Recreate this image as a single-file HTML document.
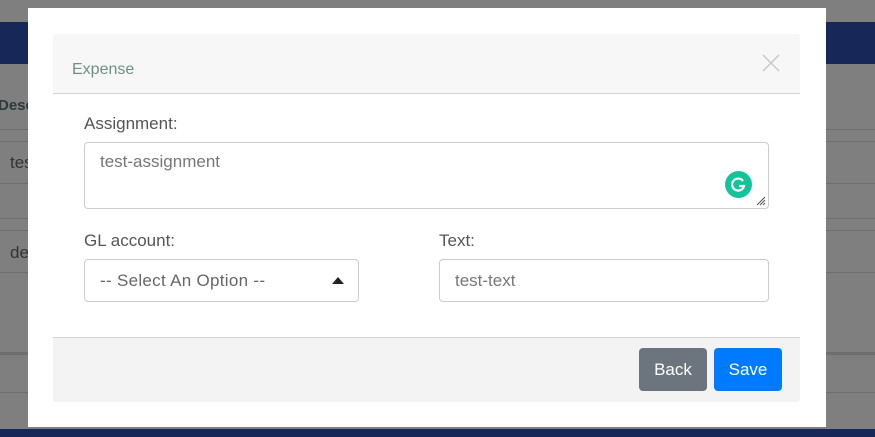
<!DOCTYPE html>
<html><head><style>
body{margin:0;width:875px;height:437px;background:#7f7f7f;position:relative;overflow:hidden;font-family:"Liberation Sans",sans-serif}
.a{position:absolute}
.ln{position:absolute;height:1px;background:#6e6e6e}
.t{font-size:17px}
</style></head><body>
<div class="a" style="left:0;top:22px;width:875px;height:42px;background:#172858"></div>
<div class="a" style="left:0;top:429px;width:875px;height:8px;background:#172858"></div>
<div class="a" style="left:-2px;top:97px;font-weight:bold;font-size:15px;color:#2d3a3a">Desc</div>
<div class="a" style="left:10px;top:153px;font-size:17px;color:#333">tes</div>
<div class="a" style="left:10px;top:243px;font-size:17px;color:#333">de</div>
<div class="ln" style="left:0;top:129px;width:875px"></div>
<div class="ln" style="left:0;top:141px;width:875px"></div>
<div class="ln" style="left:0;top:183px;width:875px"></div>
<div class="ln" style="left:0;top:218px;width:875px"></div>
<div class="ln" style="left:0;top:230px;width:875px"></div>
<div class="ln" style="left:0;top:272px;width:875px"></div>
<div class="ln" style="left:0;top:352px;width:875px;height:3px"></div>
<div class="ln" style="left:0;top:392px;width:875px"></div>

<div class="a" style="left:28px;top:8px;width:798px;height:419px;background:#fff"></div>
<div class="a" style="left:53px;top:34px;width:747px;height:59px;background:#f7f7f7;border-bottom:1px solid #d4d4d4;border-radius:3px 3px 0 0"></div>
<div class="a" style="left:72px;top:61px;font-size:16px;color:#6f8f86">Expense</div>
<svg class="a" style="left:762px;top:54px" width="18" height="18"><path d="M1 1L17 17M17 1L1 17" stroke="#c8c8c8" stroke-width="1.5"/></svg>

<div class="a t" style="left:84px;top:114px;color:#555">Assignment:</div>
<div class="a" style="left:84px;top:142px;width:683px;height:65px;border:1px solid #ccc;border-radius:4px"></div>
<div class="a t" style="left:100px;top:152px;color:#777">test-assignment</div>
<div class="a" style="left:725px;top:171px;width:27px;height:27px;border-radius:50%;background:#15c39a"></div>
<svg class="a" style="left:729px;top:175px" width="19" height="19"><path d="M14 6A6 6 0 1 0 15 11L10 11" fill="none" stroke="#fff" stroke-width="2.2"/></svg>
<svg class="a" style="left:756px;top:196px" width="10" height="10"><path d="M1 9L9 1M4 9L9 4M7 9L9 7" stroke="#555" stroke-width="1"/></svg>

<div class="a t" style="left:84px;top:231px;color:#555">GL account:</div>
<div class="a" style="left:84px;top:259px;width:273px;height:41px;border:1px solid #ccc;border-radius:4px"></div>
<div class="a t" style="left:100px;top:271px;color:#666;letter-spacing:0.3px">-- Select An Option --</div>
<svg class="a" style="left:332px;top:277px" width="12" height="7"><path d="M0 7L6 0L12 7Z" fill="#222"/></svg>

<div class="a t" style="left:439px;top:231px;color:#555">Text:</div>
<div class="a" style="left:439px;top:259px;width:328px;height:41px;border:1px solid #ccc;border-radius:4px"></div>
<div class="a t" style="left:455px;top:271px;color:#777">test-text</div>

<div class="a" style="left:53px;top:337px;width:747px;height:64px;background:#f3f3f3;border-top:1px solid #d4d4d4;border-radius:0 0 3px 3px"></div>
<div class="a t" style="left:639px;top:348px;width:68px;height:43px;background:#6c757d;border-radius:4px;color:#fff;line-height:43px;text-align:center">Back</div>
<div class="a t" style="left:714px;top:348px;width:68px;height:43px;background:#007bff;border-radius:4px;color:#fff;line-height:43px;text-align:center">Save</div>
</body></html>
